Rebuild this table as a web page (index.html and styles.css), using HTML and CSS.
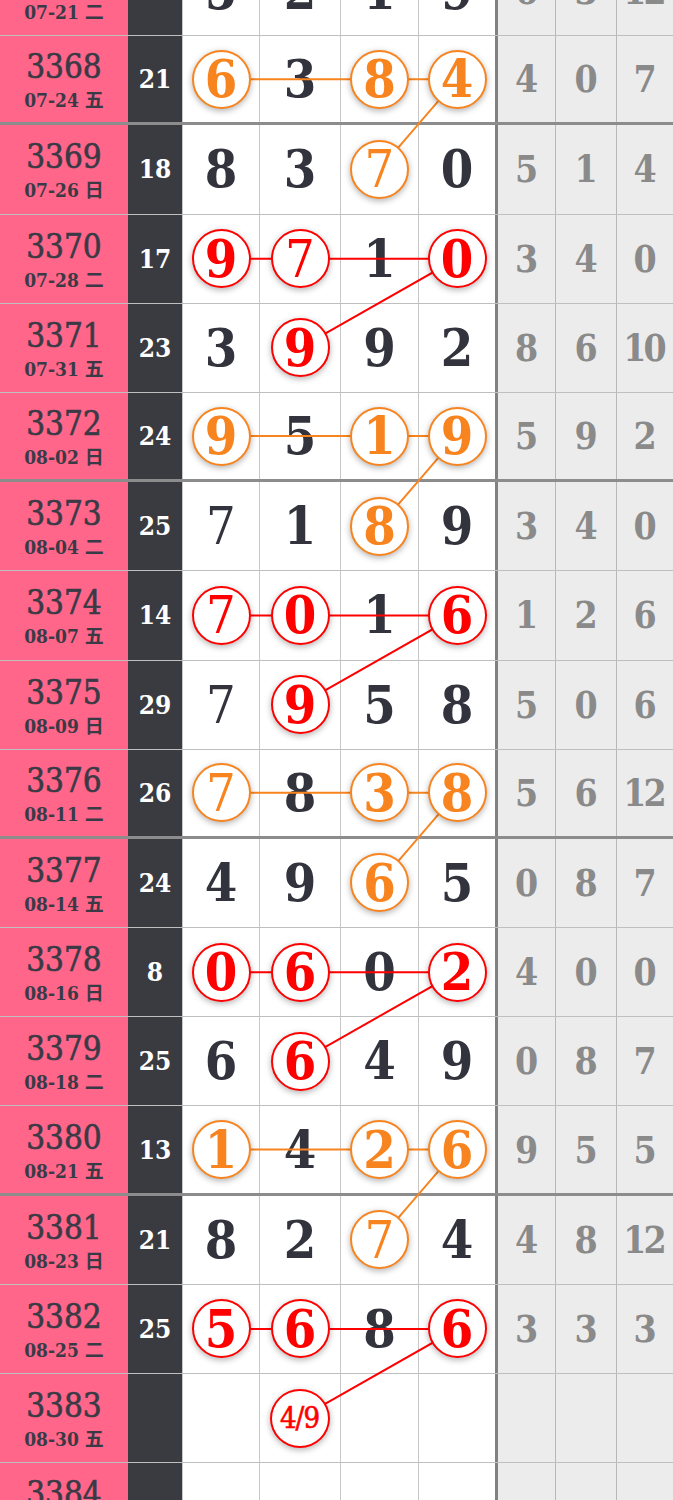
FILE: index.html
```html
<!DOCTYPE html>
<html lang="zh">
<head>
    <meta charset="UTF-8">
    <meta name="viewport" content="width=device-width, initial-scale=1.0">
    <title>走势图</title>
    <link rel="stylesheet" href="styles.css">
</head>
<body>
    <div class="chart" id="chart">
        <svg class="links" id="links"></svg>
    </div>

    <script>
        // issue, date, sum, four digits, three stats
        // digit suffix: o = orange ball, r = red ball
        const rows = [
            ['3367', '07-21 二', '17', ['5', '2', '1', '9'], ['6', '3', '12']],
            ['3368', '07-24 五', '21', ['6o', '3', '8o', '4o'], ['4', '0', '7']],
            ['3369', '07-26 日', '18', ['8', '3', '7o', '0'], ['5', '1', '4']],
            ['3370', '07-28 二', '17', ['9r', '7r', '1', '0r'], ['3', '4', '0']],
            ['3371', '07-31 五', '23', ['3', '9r', '9', '2'], ['8', '6', '10']],
            ['3372', '08-02 日', '24', ['9o', '5', '1o', '9o'], ['5', '9', '2']],
            ['3373', '08-04 二', '25', ['7', '1', '8o', '9'], ['3', '4', '0']],
            ['3374', '08-07 五', '14', ['7r', '0r', '1', '6r'], ['1', '2', '6']],
            ['3375', '08-09 日', '29', ['7', '9r', '5', '8'], ['5', '0', '6']],
            ['3376', '08-11 二', '26', ['7o', '8', '3o', '8o'], ['5', '6', '12']],
            ['3377', '08-14 五', '24', ['4', '9', '6o', '5'], ['0', '8', '7']],
            ['3378', '08-16 日', '8', ['0r', '6r', '0', '2r'], ['4', '0', '0']],
            ['3379', '08-18 二', '25', ['6', '6r', '4', '9'], ['0', '8', '7']],
            ['3380', '08-21 五', '13', ['1o', '4', '2o', '6o'], ['9', '5', '5']],
            ['3381', '08-23 日', '21', ['8', '2', '7o', '4'], ['4', '8', '12']],
            ['3382', '08-25 二', '25', ['5r', '6r', '8', '6r'], ['3', '3', '3']],
            ['3383', '08-30 五', '', ['', '4/9r', '', ''], ['', '', '']],
            ['3384', '09-01 日', '', ['', '', '', ''], ['', '', '']]
        ];

        const chart = document.getElementById('chart');
        const svg = document.getElementById('links');

        function digitCell(value) {
            const cell = document.createElement('div');
            cell.className = 'cell num';
            if (!value) return cell;
            const mark = value.slice(-1);
            if (mark === 'o' || mark === 'r') {
                const text = value.slice(0, -1);
                const ball = document.createElement('span');
                ball.className = 'ball ' + (mark === 'r' ? 'red' : 'orange');
                if (text.length > 1) ball.classList.add('small');
                if (text === '7') ball.classList.add('thin');
                ball.textContent = text;
                cell.appendChild(ball);
            } else {
                if (value === '7') cell.classList.add('thin');
                cell.textContent = value;
            }
            return cell;
        }

        rows.forEach(([issue, date, sum, digits, stats]) => {
            const row = document.createElement('div');
            row.className = 'row';
            if ((issue - 3368) % 4 === 0) row.classList.add('group-end');

            const issueCell = document.createElement('div');
            issueCell.className = 'cell issue';
            issueCell.innerHTML = `<span class="issue-no">${issue}</span><span class="issue-date">${date}</span>`;
            row.appendChild(issueCell);

            const sumCell = document.createElement('div');
            sumCell.className = 'cell sum';
            sumCell.textContent = sum;
            row.appendChild(sumCell);

            digits.forEach(d => row.appendChild(digitCell(d)));

            stats.forEach(s => {
                const cell = document.createElement('div');
                cell.className = 'cell stat';
                if (s.length > 1) cell.classList.add('wide');
                cell.textContent = s;
                row.appendChild(cell);
            });

            chart.appendChild(row);
        });

        // connect the balls: a row with several balls runs into the ball of the next row
        const box = chart.getBoundingClientRect();
        svg.setAttribute('width', box.width);
        svg.setAttribute('height', box.height);

        function centre(el) {
            const r = el.getBoundingClientRect();
            return (r.left + r.width / 2 - box.left) + ',' + (r.top + r.height / 2 - box.top);
        }

        const rowEls = chart.querySelectorAll('.row');
        rowEls.forEach((row, i) => {
            const balls = row.querySelectorAll('.ball');
            const next = rowEls[i + 1] ? rowEls[i + 1].querySelectorAll('.ball') : [];
            if (balls.length < 2 || !next.length) return;
            const points = [...balls, next[0]].map(centre).join(' ');
            const line = document.createElementNS('http://www.w3.org/2000/svg', 'polyline');
            line.setAttribute('points', points);
            line.setAttribute('class', 'link ' + (balls[0].classList.contains('red') ? 'red' : 'orange'));
            svg.appendChild(line);
        });
    </script>
</body>
</html>
```

FILE: styles.css
```css
html, body {
    overflow: hidden;
}

body {
    margin: 0;
    background-color: #ffffff;
    font-family: "DejaVu Serif Condensed", "DejaVu Serif", "Noto Sans CJK SC", serif;
    font-stretch: condensed;
}

.chart {
    position: relative;
    width: 673px;
    margin-top: -53px;
}

.links {
    position: absolute;
    top: 0;
    left: 0;
    z-index: 1;
    pointer-events: none;
}

.link {
    fill: none;
    stroke-width: 2;
}

.link.orange {
    stroke: #f7841f;
}

.link.red {
    stroke: #ff0000;
}

.row {
    display: grid;
    grid-template-columns: 128px 54px 77px 81px 78px 77px 60px 61px 57px;
    height: 89.2px;
    box-sizing: border-box;
    border-bottom: 1px solid rgba(0, 0, 0, 0.25);
}

.row.group-end {
    border-bottom: 3px solid rgba(0, 0, 0, 0.45);
}

.cell {
    display: flex;
    align-items: center;
    justify-content: center;
    min-width: 0;
}

.issue {
    flex-direction: column;
    padding-top: 2px;
    background-color: #ff6689;
    color: #3a3a46;
}

.issue-no {
    font-size: 33px;
    line-height: 38px;
    -webkit-text-stroke: 0.6px #3a3a46;
}

.issue-date {
    margin-top: 2px;
    font-size: 19px;
    font-weight: bold;
    line-height: 24px;
}

.sum {
    background-color: #3a3a41;
    color: #ffffff;
    font-size: 26px;
    font-weight: bold;
}

.num {
    border-left: 1px solid rgba(0, 0, 0, 0.22);
    background-color: #ffffff;
    color: #33333d;
    font-size: 52px;
    font-weight: bold;
    line-height: 1;
}

.num.thin {
    font-weight: normal;
}

.ball {
    position: relative;
    z-index: 2;
    display: flex;
    align-items: center;
    justify-content: center;
    width: 55px;
    height: 55px;
    border: 2.5px solid currentColor;
    border-radius: 50%;
    background-color: #ffffff;
    box-shadow: 0 2px 6px rgba(0, 0, 0, 0.3);
}

.ball.orange {
    color: #f7841f;
}

.ball.red {
    color: #ff0000;
}

.ball.thin {
    font-weight: normal;
}

.ball.small {
    font-size: 29px;
    font-weight: normal;
    letter-spacing: -1px;
    padding-right: 1px;
    -webkit-text-stroke: 0.6px #ff0000;
}

.stat {
    border-left: 1px solid rgba(0, 0, 0, 0.22);
    background-color: #ececec;
    color: #8a8a8a;
    font-size: 37px;
    font-weight: bold;
}

.stat.wide {
    letter-spacing: -3px;
    padding-right: 3px;
}

.num + .stat {
    border-left: 3px solid rgba(0, 0, 0, 0.45);
}
```
